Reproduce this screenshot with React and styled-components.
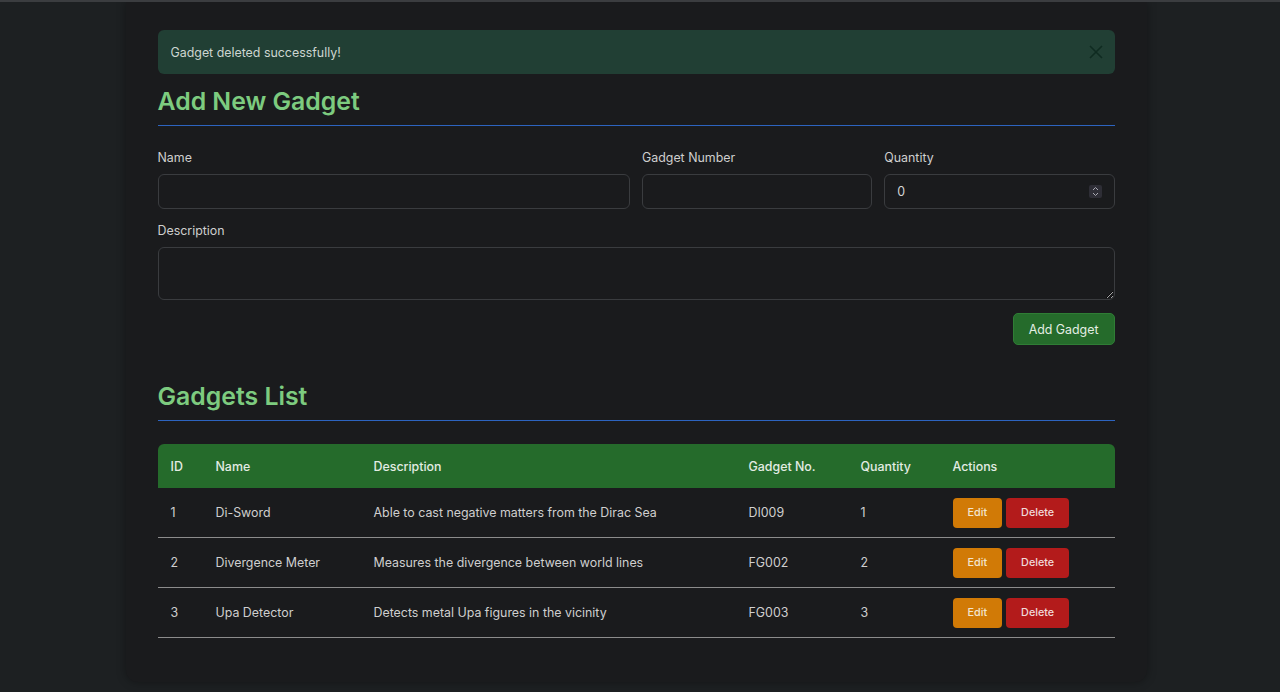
import React from "react"
import styled, { createGlobalStyle } from "styled-components"

const GlobalStyle = createGlobalStyle`
  html, body {
    margin: 0;
    padding: 0;
    background: #1d2022;
    color-scheme: dark;
  }
  body {
    font-family: Inter, "Noto Sans", "Liberation Sans", sans-serif;
    color: #d4d4d4;
    border-top: 2px solid #3b3d40;
    overflow: hidden;
  }
`

const Page = styled.div`
  display: flex;
  justify-content: center;
  min-height: 690px;
  padding-right: 8px;
`

const Card = styled.div`
  width: 957px;
  padding: 28px 32px 44px;
  background: #1a1b1d;
  border-radius: 0 0 12px 12px;
  box-shadow: 0 0 10px rgba(0, 0, 0, 0.35);
  align-self: flex-start;
`

const Alert = styled.div`
  display: flex;
  align-items: center;
  justify-content: space-between;
  height: 44px;
  padding: 0 9px 0 13px;
  box-sizing: border-box;
  background: #213f34;
  border-radius: 6px;
  font-size: 12.4px;
  color: #cdd6d1;
`

const CloseButton = styled.button`
  display: flex;
  align-items: center;
  justify-content: center;
  padding: 0;
  width: 20px;
  height: 20px;
  background: none;
  border: none;
  color: #0f2b21;
  cursor: pointer;
`

const SectionTitle = styled.h2`
  margin: ${(p) => p.$top}px 0 ${(p) => p.$bottom}px;
  height: 32px;
  padding-bottom: 8px;
  font-size: 24.8px;
  line-height: 32px;
  font-weight: 600;
  color: #7dcb7f;
  border-bottom: 1px solid #2d64c0;
`

const FieldRow = styled.div`
  display: grid;
  grid-template-columns: ${(p) => p.$cols};
  column-gap: 12px;
  margin-bottom: 13px;
`

const Field = styled.div`
  display: flex;
  flex-direction: column;
`

const Label = styled.label`
  display: block;
  height: 18px;
  font-size: 12.4px;
  line-height: 18px;
  margin-bottom: 7px;
  color: #cfcfcf;
`

const InputWrap = styled.div`
  position: relative;
  display: flex;
  flex-direction: column;
`

const Input = styled.input`
  height: 35px;
  box-sizing: border-box;
  padding: 0 12px;
  background: #1a1b1d;
  border: 1px solid #3a3c3f;
  border-radius: 6px;
  color: #d4d4d4;
  font-family: inherit;
  font-size: 12.4px;
  outline: none;
  -moz-appearance: textfield;
  &::-webkit-outer-spin-button,
  &::-webkit-inner-spin-button {
    -webkit-appearance: none;
    margin: 0;
  }
`

const Spinner = styled.span`
  position: absolute;
  right: 13px;
  top: 11px;
  width: 13px;
  height: 13px;
  border-radius: 2px;
  background: #2e2e36;
  display: flex;
  align-items: center;
  justify-content: center;
  color: #a9a9b2;
`

const TextArea = styled.textarea`
  display: block;
  height: 53px;
  box-sizing: border-box;
  padding: 8px 12px;
  background: #1a1b1d;
  border: 1px solid #3a3c3f;
  border-radius: 6px;
  color: #d4d4d4;
  font-family: inherit;
  font-size: 12.4px;
  outline: none;
`

const Actions = styled.div`
  display: flex;
  justify-content: flex-end;
  height: 32px;
`

const PrimaryButton = styled.button`
  height: 32px;
  padding: 0 15px;
  background: #256b2b;
  border: 1px solid #2f7d35;
  border-radius: 5px;
  color: #e4eee4;
  font-family: inherit;
  font-size: 12.4px;
  cursor: pointer;
`

const Table = styled.table`
  width: 100%;
  table-layout: fixed;
  border-collapse: separate;
  border-spacing: 0;
  font-size: 12.4px;
`

const HeadCell = styled.th`
  box-sizing: border-box;
  width: ${(p) => p.$w}px;
  height: 44px;
  padding: 0 13px;
  text-align: left;
  font-weight: 500;
  color: #e3ece3;
  background: #256b2b;
  &:first-child {
    border-top-left-radius: 6px;
  }
  &:last-child {
    border-top-right-radius: 6px;
  }
`

const Cell = styled.td`
  box-sizing: border-box;
  height: 50px;
  padding: 0 13px;
  color: #cfcfcf;
  white-space: nowrap;
  border-bottom: 1px solid #8c8c8c;
`

const ButtonGroup = styled.div`
  display: flex;
  gap: 4px;
`

const SmallButton = styled.button`
  height: 30px;
  padding: 0 15px;
  background: ${(p) => (p.$danger ? "#b31b1b" : "#d17a06")};
  border: none;
  border-radius: 4px;
  color: ${(p) => (p.$danger ? "#f0dada" : "#f3e5cf")};
  font-family: inherit;
  font-size: 10.8px;
  font-weight: 500;
  cursor: pointer;
`

const gadgets = [
  { id: 1, name: "Di-Sword", description: "Able to cast negative matters from the Dirac Sea", number: "DI009", quantity: 1 },
  { id: 2, name: "Divergence Meter", description: "Measures the divergence between world lines", number: "FG002", quantity: 2 },
  { id: 3, name: "Upa Detector", description: "Detects metal Upa figures in the vicinity", number: "FG003", quantity: 3 },
]

const columns = [
  { label: "ID", w: 45 },
  { label: "Name", w: 158 },
  { label: "Description", w: 375 },
  { label: "Gadget No.", w: 112 },
  { label: "Quantity", w: 92 },
  { label: "Actions", w: 175 },
]

function App() {
  return (
    <>
      <GlobalStyle />
      <Page>
        <Card>
          <Alert>
            <span>Gadget deleted successfully!</span>
            <CloseButton aria-label="Close">
              <svg width="14" height="14" viewBox="0 0 14 14">
                <path d="M1 1L13 13M13 1L1 13" stroke="currentColor" strokeWidth="1.6" />
              </svg>
            </CloseButton>
          </Alert>

          <SectionTitle $top={11} $bottom={23}>Add New Gadget</SectionTitle>
          <FieldRow $cols="calc(50% - 6px) 1fr 1fr">
            <Field>
              <Label>Name</Label>
              <Input type="text" />
            </Field>
            <Field>
              <Label>Gadget Number</Label>
              <Input type="text" />
            </Field>
            <Field>
              <Label>Quantity</Label>
              <InputWrap>
                <Input type="number" defaultValue={0} />
                <Spinner>
                  <svg width="7" height="11" viewBox="0 0 7 11">
                    <path d="M1 4L3.5 1.5L6 4M1 7L3.5 9.5L6 7" fill="none" stroke="currentColor" strokeWidth="1" />
                  </svg>
                </Spinner>
              </InputWrap>
            </Field>
          </FieldRow>
          <FieldRow $cols="1fr">
            <Field>
              <Label>Description</Label>
              <TextArea />
            </Field>
          </FieldRow>
          <Actions>
            <PrimaryButton>Add Gadget</PrimaryButton>
          </Actions>

          <SectionTitle $top={35} $bottom={23}>Gadgets List</SectionTitle>
          <Table>
            <thead>
              <tr>
                {columns.map((c) => (
                  <HeadCell key={c.label} $w={c.w}>
                    {c.label}
                  </HeadCell>
                ))}
              </tr>
            </thead>
            <tbody>
              {gadgets.map((g) => (
                <tr key={g.id}>
                  <Cell>{g.id}</Cell>
                  <Cell>{g.name}</Cell>
                  <Cell>{g.description}</Cell>
                  <Cell>{g.number}</Cell>
                  <Cell>{g.quantity}</Cell>
                  <Cell>
                    <ButtonGroup>
                      <SmallButton>Edit</SmallButton>
                      <SmallButton $danger>Delete</SmallButton>
                    </ButtonGroup>
                  </Cell>
                </tr>
              ))}
            </tbody>
          </Table>
        </Card>
      </Page>
    </>
  )
}

export default App
